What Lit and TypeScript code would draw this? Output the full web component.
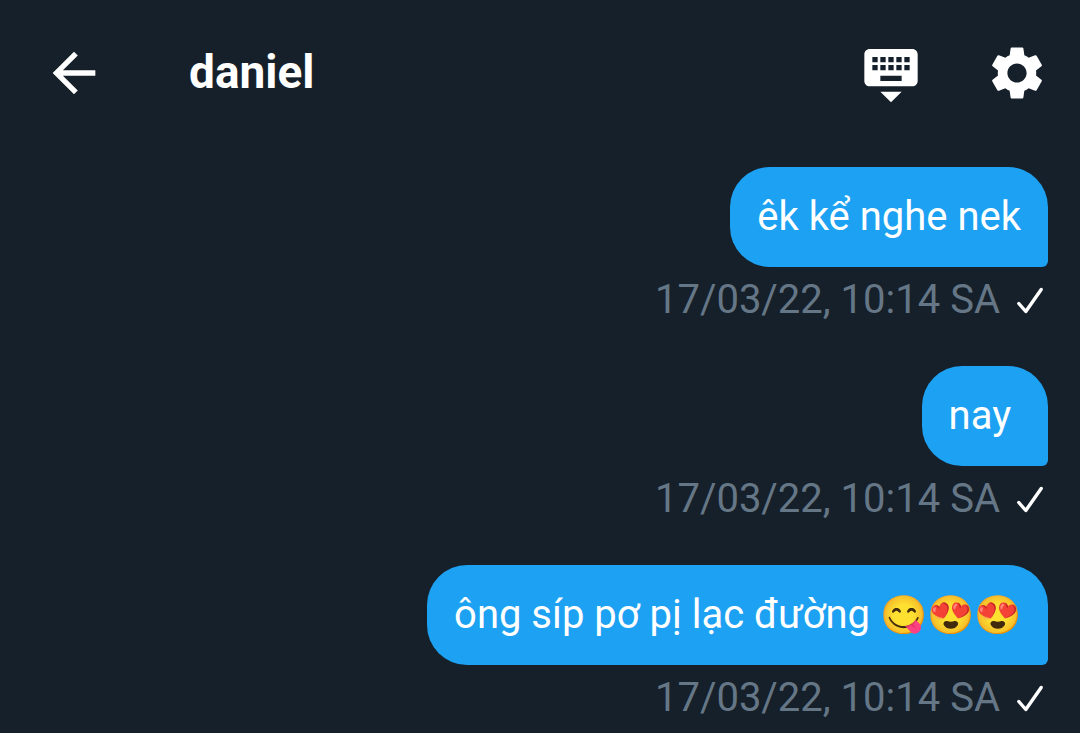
import { LitElement, html, css } from "lit";
import { customElement } from "lit/decorators.js";

interface Message {
  text: string;
  emoji?: string;
  time: string;
}

const messages: Message[] = [
  { text: "êk kể nghe nek", time: "17/03/22, 10:14 SA" },
  { text: "nay ", time: "17/03/22, 10:14 SA" },
  { text: "ông síp pơ pị lạc đường ", emoji: "😋😍😍", time: "17/03/22, 10:14 SA" },
];

@customElement("chat-header")
export class ChatHeader extends LitElement {
  static styles = css`
    :host {
      display: block;
    }
    .bar {
      display: flex;
      align-items: center;
      padding: 41px 31px 41px 42px;
    }
    .title {
      flex: 1;
      margin: 0 0 0 83px;
      padding-bottom: 2px;
      font-size: 46px;
      line-height: 56px;
      font-weight: 700;
    }
    .actions {
      display: flex;
      gap: 62px;
    }
    .icon-button {
      display: block;
      width: 64px;
      height: 64px;
      padding: 0;
      border: 0;
      background: none;
      color: inherit;
      cursor: pointer;
    }
    .icon {
      display: block;
      width: 64px;
      height: 64px;
      fill: currentColor;
    }
  `;

  render() {
    return html`
      <header class="bar">
        <button class="icon-button" aria-label="Quay lại">
          <svg class="icon" viewBox="0 0 24 24">
            <path d="M20 11H7.83l5.59-5.59L12 4l-8 8 8 8 1.41-1.41L7.83 13H20v-2z" />
          </svg>
        </button>
        <h1 class="title">daniel</h1>
        <div class="actions">
          <button class="icon-button" aria-label="Ẩn bàn phím">
            <svg class="icon" viewBox="0 0 24 24">
              <path
                d="M20 3H4c-1.1 0-1.99.9-1.99 2L2 15c0 1.1.9 2 2 2h16c1.1 0 2-.9 2-2V5c0-1.1-.9-2-2-2zm-9 3h2v2h-2V6zm0 3h2v2h-2V9zM8 6h2v2H8V6zm0 3h2v2H8V9zm-1 2H5V9h2v2zm0-3H5V6h2v2zm9 7H8v-2h8v2zm0-4h-2V9h2v2zm0-3h-2V6h2v2zm3 3h-2V9h2v2zm0-3h-2V6h2v2zm-7 15l4-4H8l4 4z"
              />
            </svg>
          </button>
          <button class="icon-button" aria-label="Cài đặt">
            <svg class="icon" viewBox="0 0 24 24">
              <path
                d="M19.14 12.94c.04-.3.06-.61.06-.94 0-.32-.02-.64-.07-.94l2.03-1.58c.18-.14.23-.41.12-.61l-1.92-3.32c-.12-.22-.37-.29-.59-.22l-2.39.96c-.5-.38-1.03-.7-1.62-.94l-.36-2.54c-.04-.24-.24-.41-.48-.41h-3.84c-.24 0-.43.17-.47.41l-.36 2.54c-.59.24-1.13.57-1.62.94l-2.39-.96c-.22-.08-.47 0-.59.22L2.74 8.87c-.12.21-.08.47.12.61l2.03 1.58c-.05.3-.09.63-.09.94s.02.64.07.94l-2.03 1.58c-.18.14-.23.41-.12.61l1.92 3.32c.12.22.37.29.59.22l2.39-.96c.5.38 1.03.7 1.62.94l.36 2.54c.05.24.24.41.48.41h3.84c.24 0 .44-.17.47-.41l.36-2.54c.59-.24 1.13-.56 1.62-.94l2.39.96c.22.08.47 0 .59-.22l1.92-3.32c.12-.22.07-.47-.12-.61l-2.01-1.58zM12 15.6c-1.98 0-3.6-1.62-3.6-3.6s1.62-3.6 3.6-3.6 3.6 1.62 3.6 3.6-1.62 3.6-3.6 3.6z"
              />
            </svg>
          </button>
        </div>
      </header>
    `;
  }
}

@customElement("app-root")
export class AppRoot extends LitElement {
  static styles = css`
    :host {
      display: block;
      min-height: 100vh;
      background: #16202a;
      color: #fff;
      font-family: Roboto, "Noto Sans", sans-serif;
    }
    .thread {
      list-style: none;
      margin: 0;
      padding: 21px 32px 0;
      display: flex;
      flex-direction: column;
      gap: 33px;
    }
    .message {
      display: flex;
      flex-direction: column;
      align-items: flex-end;
    }
    .bubble {
      margin: 0;
      padding: 26px 27px;
      border-radius: 40px 40px 6px 40px;
      background: #1da1f2;
      font-size: 40px;
      line-height: 48px;
      white-space: pre-wrap;
    }
    .emoji {
      font-size: 38px;
      line-height: 40px;
    }
    .meta {
      display: flex;
      align-items: center;
      gap: 16px;
      padding: 9px 4px 9px 0;
      font-size: 40px;
      line-height: 48px;
      color: #657786;
    }
    .check {
      display: block;
      width: 28px;
      height: 28px;
      fill: none;
      stroke: #fff;
      stroke-width: 3.4;
      stroke-linecap: round;
      stroke-linejoin: round;
    }
  `;

  render() {
    return html`
      <chat-header></chat-header>
      <ol class="thread">
        ${messages.map(
          (m) => html`
            <li class="message">
              <p class="bubble">${m.text}${m.emoji ? html`<span class="emoji">${m.emoji}</span>` : ""}</p>
              <div class="meta">
                <time>${m.time}</time>
                <svg class="check" viewBox="0 0 28 28" role="img" aria-label="Đã gửi">
                  <path d="M2.800 17.500l7 8L25.200 3.500" />
                </svg>
              </div>
            </li>
          `,
        )}
      </ol>
    `;
  }
}
